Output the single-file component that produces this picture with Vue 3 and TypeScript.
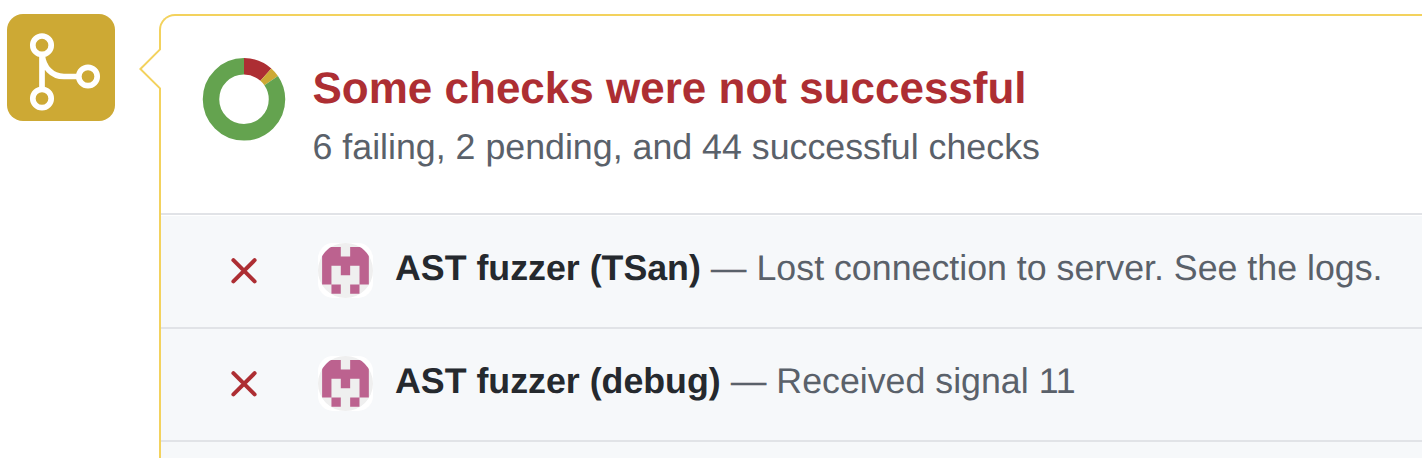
<script setup lang="ts">
interface Check {
  name: string
  detail: string
}

interface Segment {
  color: string
  dash: string
  offset: number
}

const checks: Check[] = [
  { name: 'AST fuzzer (TSan)', detail: 'Lost connection to server. See the logs.' },
  { name: 'AST fuzzer (debug)', detail: 'Received signal 11' },
]

const counts = { failing: 6, pending: 2, successful: 44 }
const total = counts.failing + counts.pending + counts.successful

const segments: Segment[] = [
  { color: '#ad2e33', dash: `${counts.failing} ${total}`, offset: 0 },
  { color: '#cda934', dash: `${counts.pending} ${total}`, offset: -counts.failing },
  { color: '#64a34f', dash: `${counts.successful} ${total}`, offset: -(counts.failing + counts.pending) },
]
</script>

<template>
  <main class="page">
    <div class="badge">
      <svg width="108" height="107" viewBox="0 0 108 107" fill="none" stroke="#fff" stroke-width="5.7">
        <circle cx="35" cy="31.2" r="9.2" />
        <circle cx="35" cy="84.5" r="9.2" />
        <circle cx="81" cy="62.5" r="9.2" />
        <path d="M35 40.3V75.5M35.2 41C36.5 53 44.5 62.5 57 62.5H72" />
      </svg>
    </div>

    <section class="panel">
      <svg class="caret" width="22" height="42" viewBox="0 0 22 42">
        <path d="M22 1H21L1.4 21 21 40.5H22Z" fill="#fff" />
        <path d="M21 0V1.4L1.4 21 21 40.4V42" fill="none" stroke="#f3d25d" stroke-width="2" />
      </svg>

      <header class="summary">
        <svg class="donut" width="84" height="84" viewBox="0 0 84 84">
          <g transform="translate(0 .35) rotate(-90 42 42)" fill="none" stroke-width="16.5">
            <circle
              v-for="s in segments"
              :key="s.color"
              cx="42"
              cy="42"
              r="33"
              :pathLength="total"
              :stroke="s.color"
              :stroke-dasharray="s.dash"
              :stroke-dashoffset="s.offset"
            />
          </g>
        </svg>
        <div class="headline">
          <h1>Some checks were not successful</h1>
          <p>{{ counts.failing }} failing, {{ counts.pending }} pending, and {{ counts.successful }} successful checks</p>
        </div>
      </header>

      <ul class="checks">
        <li v-for="check in checks" :key="check.name">
          <svg class="cross" width="28" height="28" viewBox="0 0 28 28">
            <path d="M3.4 3.2 24.6 24.4M24.6 3.2 3.4 24.4" stroke="#ad2e33" stroke-width="4" stroke-linecap="round" />
          </svg>
          <span class="avatar">
            <svg width="55" height="55" viewBox="0 0 55 55">
              <g class="disc">
                <rect width="55" height="55" fill="#efefef" />
                <path
                  transform="translate(4.1 4.1) scale(9.35)"
                  d="M0 0H2V1H3V0H5V4H4V5H3V4H4V2H3V3H2V2H1V4H2V5H1V4H0Z"
                  fill="#bc628f"
                />
              </g>
            </svg>
          </span>
          <span class="label"><strong>{{ check.name }}</strong> — {{ check.detail }}</span>
        </li>
        <li></li>
      </ul>
    </section>
  </main>
</template>

<style>
body {
  margin: 0;
  background: #fff;
}
</style>

<style scoped>
.page {
  display: flex;
  align-items: flex-start;
  box-sizing: border-box;
  width: 1422px;
  height: 458px;
  padding: 14px 0 0 7px;
  overflow: hidden;
  background: #fff;
  font-family: "Liberation Sans", Arial, sans-serif;
  text-rendering: geometricPrecision;
}
.badge {
  flex: none;
  width: 108px;
  height: 107px;
  border-radius: 16px;
  background: #cda934;
}
.badge svg {
  display: block;
}
.panel {
  position: relative;
  flex: 1;
  box-sizing: border-box;
  height: 460px;
  margin-left: 44px;
  border: solid #f3d25d;
  border-width: 2px 0 0 2px;
  border-top-left-radius: 16px;
}
.caret {
  position: absolute;
  left: -22px;
  top: 32px;
}
.summary {
  display: flex;
  box-sizing: border-box;
  height: 197px;
  padding: 41px 0 0 41px;
}
.donut {
  flex: none;
}
.headline {
  margin-left: 26.5px;
  white-space: nowrap;
}
h1 {
  margin: 7px 0 0;
  font-size: 44px;
  line-height: 50px;
  color: #ad2e33;
}
p {
  margin: 12px 0 0;
  font-size: 35.75px;
  line-height: 42px;
  color: #5a616a;
}
.checks {
  margin: 0;
  padding: 0;
  list-style: none;
}
li {
  display: flex;
  align-items: flex-start;
  box-sizing: border-box;
  height: 113px;
  padding-left: 69px;
  border-top: 2px solid #e1e3e7;
  background: #f6f8fa;
}
li:first-child {
  height: 114px;
  padding-top: 1px;
  box-shadow: inset 0 1px #fff;
}
.cross {
  flex: none;
  margin-top: 41px;
}
.avatar {
  flex: none;
  width: 55px;
  height: 55px;
  margin: 27px 0 0 60px;
  border-radius: 15px;
  background: #fff;
}
.avatar svg {
  display: block;
}
.disc {
  clip-path: circle(27.5px at 27.5px 27.5px);
}
.label {
  margin: 31px 0 0 22px;
  font-size: 35.75px;
  line-height: 42px;
  white-space: nowrap;
  color: #5a616a;
}
.label strong {
  color: #25292e;
}
</style>
